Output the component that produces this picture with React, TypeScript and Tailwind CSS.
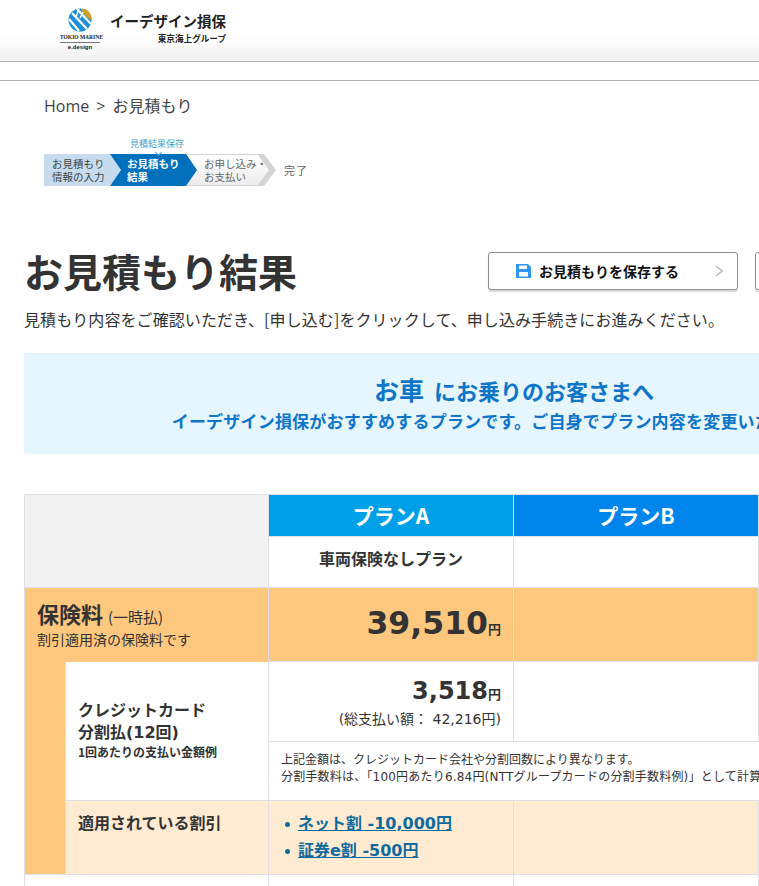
import React from "react";

const cell = "border-r border-b border-[#dcdfe6]";
const verdana = "font-['DejaVu_Sans','Noto_Sans_CJK_JP',sans-serif]";

function Logo() {
  return (
    <div className="flex items-start">
      <div className="flex w-[42px] flex-col items-center pt-[8px]">
        <svg width="24" height="24" viewBox="0 0 24 24">
          <circle cx="12" cy="12" r="11.5" fill="#1c8fd6" />
          <path d="M13 1 C19 0 24 5 23.5 12 C19 10 15 6 13 1Z" fill="#c9a227" />
          <path d="M4 5 L19 21 M1 11 L11 23 M9 1 L23 16" stroke="#fff" strokeWidth="2.2" fill="none" />
          <path d="M11 1 L8 9 M15 4 L12 10" stroke="#fff" strokeWidth="1.4" fill="none" />
        </svg>
        <div className="mt-[2px] w-[40px] border-b border-[#777] pb-[1px] text-center font-['Liberation_Serif',serif] text-[5.5px] leading-[7px] font-bold whitespace-nowrap text-[#222]">
          TOKIO MARINE
        </div>
        <div className="text-center font-['Liberation_Sans',sans-serif] text-[6px] leading-[9px] font-bold text-[#222]">
          e.design
        </div>
      </div>
      <div className="ml-[9px] flex flex-col items-end pt-[10px]">
        <div className="text-[14.5px] leading-[22px] font-bold whitespace-nowrap text-[#222]">
          イーデザイン損保
        </div>
        <div className="text-[8.6px] leading-[12px] font-bold whitespace-nowrap text-[#222]">
          東京海上グループ
        </div>
      </div>
    </div>
  );
}

function Steps() {
  return (
    <div className="mt-[19px] ml-[44px] w-fit">
      <div className="mb-[4px] ml-[86px] text-[9px] leading-[13px] text-[#3aa3cf]">見積結果保存</div>
      <div className="relative flex h-[32px] items-center">
        <div className="absolute top-[-4px] left-[112px] z-[3] h-[5px] w-[5px] -rotate-45 border-b border-l border-[#3aa3cf]" />
        <div className="z-[1] flex h-[32px] w-[77px] items-center bg-[#c6dcee] pl-[8px] text-[10.5px] leading-[13px] whitespace-nowrap text-[#444] [clip-path:polygon(0_0,66px_0,77px_50%,66px_100%,0_100%)]">
          お見積もり
          <br />
          情報の入力
        </div>
        <div className="z-[2] -ml-[11px] flex h-[32px] w-[87px] items-center bg-[#0070bd] pl-[17px] text-[10.5px] leading-[13px] font-bold whitespace-nowrap text-white [clip-path:polygon(0_0,76px_0,87px_50%,76px_100%,0_100%,11px_50%)]">
          お見積もり
          <br />
          結果
        </div>
        <div className="z-[1] -ml-[11px] flex h-[32px] w-[90px] items-center bg-[#d4d4d4] [clip-path:polygon(0_0,78px_0,90px_50%,78px_100%,0_100%,11px_50%)]">
          <div className="flex h-[30px] w-[84px] items-center bg-gradient-to-b from-white to-[#ececec] pl-[18px] text-[10.5px] leading-[13px] whitespace-nowrap text-[#666] [clip-path:polygon(0_0,72px_0,83px_50%,72px_100%,0_100%)]">
            お申し込み・
            <br />
            お支払い
          </div>
        </div>
        <div className="ml-[8px] text-[11px] tracking-[1px] text-[#666]">完了</div>
      </div>
    </div>
  );
}

export default function App() {
  return (
    <div className="h-[886px] w-[759px] overflow-hidden bg-white font-['Noto_Sans_CJK_JP',sans-serif] text-[#333]">
      <header className="h-[62px] border-b border-[#b3b3b3] bg-gradient-to-b from-white from-60% to-[#f0f0f0] pl-[59px]">
        <Logo />
      </header>
      <div className="h-[19px] border-b border-[#b3b3b3]" />

      <nav className="mt-[12px] pl-[44px] text-[16px] leading-[24px] text-[#444]">
        <span className="font-['Open_Sans',sans-serif]">Home</span>
        <span className="mx-[7px] font-['Open_Sans',sans-serif]">&gt;</span>
        お見積もり
      </nav>

      <Steps />

      <main className="w-[980px] pl-[24px]">
        <div className="mt-[66px] flex h-[38px] items-center">
          <h1 className="w-[464px] shrink-0 pb-[3px] text-[39px] leading-[38px] font-bold whitespace-nowrap">
            お見積もり結果
          </h1>
          <button className="flex h-[38px] w-[250px] shrink-0 items-center rounded-[3px] border border-[#8a8f96] bg-white pl-[27px] text-[14px] font-bold text-[#111] shadow-[0_2px_1px_#d8d8d8]">
            <svg width="15" height="14" viewBox="0 0 15 14" className="mr-[8px]">
              <path d="M0 0H12L15 3V14H0Z" fill="#2f97f0" />
              <rect x="3" y="1.5" width="8" height="3.5" fill="#fff" />
              <rect x="3" y="8" width="9" height="4.5" fill="#fff" />
            </svg>
            お見積もりを保存する
            <svg width="8" height="12" viewBox="0 0 8 12" className="ml-[36px]">
              <path d="M1 1L7 6L1 11" stroke="#b5b9bf" strokeWidth="1.5" fill="none" />
            </svg>
          </button>
          <button className="ml-[17px] h-[38px] w-[240px] shrink-0 rounded-[3px] border border-[#8a8f96] bg-white shadow-[0_2px_1px_#d8d8d8]" />
        </div>

        <p className="mt-[17px] text-[16px] leading-[24px] tracking-[0.08px] whitespace-nowrap">
          見積もり内容をご確認いただき、[申し込む]をクリックして、申し込み手続きにお進みください。
        </p>

        <section className="mt-[22px] flex h-[101px] w-[980px] flex-col items-center bg-[#e6f6fe] pt-[18px] font-bold text-[#0f75c9]">
          <div className="text-[22px] leading-[36px] whitespace-nowrap">
            <span className="mr-[5px] text-[25px]">お車</span> にお乗りのお客さまへ
          </div>
          <div className="text-[17px] leading-[26px] tracking-[0.2px] whitespace-nowrap">
            イーデザイン損保がおすすめするプランです。ご自身でプラン内容を変更いただけます。
          </div>
        </section>

        <table className="mt-[40px] w-[980px] table-fixed border-separate border-spacing-0 border-t border-l border-[#dcdfe6]">
          <colgroup>
            <col className="w-[41px]" />
            <col className="w-[203px]" />
            <col className="w-[245px]" />
            <col className="w-[245px]" />
            <col className="w-[245px]" />
          </colgroup>
          <tbody>
            <tr className="h-[42px]">
              <td colSpan={2} rowSpan={2} className={`${cell} bg-[#f2f2f2]`} />
              <th className={`${cell} bg-[#00a0e9] text-[21px] font-bold text-white`}>プランA</th>
              <th className={`${cell} bg-[#0085ed] text-[21px] font-bold text-white`}>プランB</th>
              <th className={`${cell} bg-[#0070bd] text-[21px] font-bold text-white`}>プランC</th>
            </tr>
            <tr className="h-[51px]">
              <td className={`${cell} pb-[8px] text-center text-[16px] font-bold`}>車両保険なしプラン</td>
              <td className={cell} />
              <td className={cell} />
            </tr>
            <tr className="h-[74px] bg-[#fec77e]">
              <td colSpan={2} className={`${cell} border-b-0 pb-[2px] pl-[12px] align-middle`}>
                <div className="text-[22px] leading-[26px] font-bold">
                  保険料 <span className="text-[15px] font-normal">(一時払)</span>
                </div>
                <div className="text-[14px] leading-[18px]">割引適用済の保険料です</div>
              </td>
              <td className={`${cell} pr-[12px] pb-[2px] text-right`}>
                <span className={`${verdana} text-[31.5px] font-bold`}>39,510</span>
                <span className="text-[13px] font-bold">円</span>
              </td>
              <td className={cell} />
              <td className={cell} />
            </tr>
            <tr className="h-[80px]">
              <td rowSpan={3} className={`${cell} bg-[#fec77e]`} />
              <td rowSpan={2} className={`${cell} pl-[12px] align-top`}>
                <div className={`${verdana} pt-[38px] text-[16px] leading-[22px] font-bold`}>
                  クレジットカード
                  <br />
                  分割払(12回)
                </div>
                <div className="text-[12px] leading-[16px] font-bold">1回あたりの支払い金額例</div>
              </td>
              <td className={`${cell} pt-[1px] pr-[12px] text-right`}>
                <div className="leading-[30px]">
                  <span className={`${verdana} text-[24px] font-bold`}>3,518</span>
                  <span className="text-[13px] font-bold">円</span>
                </div>
                <div className={`${verdana} text-[14px] leading-[20px]`}>(総支払い額： 42,216円)</div>
              </td>
              <td className={cell} />
              <td className={cell} />
            </tr>
            <tr className="h-[59px]">
              <td colSpan={3} className={`${cell} ${verdana} pt-[10px] pl-[12px] align-top text-[12px] leading-[17px] whitespace-nowrap`}>
                上記金額は、クレジットカード会社や分割回数により異なります。
                <br />
                <span className="tracking-[0.2px]">
                  分割手数料は、「100円あたり6.84円(NTTグループカードの分割手数料例)」として計算しています。
                </span>
              </td>
            </tr>
            <tr className="h-[74px] bg-[#feebd2]">
              <td className={`${cell} pt-[9px] pl-[12px] align-top text-[16px] leading-[24px] font-bold`}>
                適用されている割引
              </td>
              <td className={`${cell} pt-[11px] pl-[16px] align-top`}>
                <ul className={`${verdana} flex flex-col gap-[3px] text-[16px] leading-[24px] font-bold text-[#0f6a9e]`}>
                  <li className="flex items-center">
                    <span className="mr-[8px] h-[5px] w-[5px] rounded-full bg-[#0f6a9e]" />
                    <a className="underline">ネット割 -10,000円</a>
                  </li>
                  <li className="flex items-center">
                    <span className="mr-[8px] h-[5px] w-[5px] rounded-full bg-[#0f6a9e]" />
                    <a className="underline">証券e割 -500円</a>
                  </li>
                </ul>
              </td>
              <td className={cell} />
              <td className={cell} />
            </tr>
            <tr className="h-[40px]">
              <td colSpan={2} className={cell} />
              <td className={cell} />
              <td className={cell} />
              <td className={cell} />
            </tr>
          </tbody>
        </table>
      </main>
    </div>
  );
}
